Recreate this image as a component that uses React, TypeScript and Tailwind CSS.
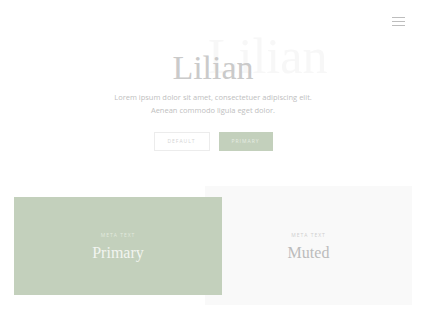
import React from "react";

export default function App() {
  return (
    <div className="w-[426px] h-[320px] bg-white overflow-hidden relative" style={{ fontFamily: '"Open Sans", sans-serif' }}>
      <header className="flex justify-end pt-[17px] pr-[21px]">
        <div className="flex flex-col gap-[3px] w-[13px]">
          <span className="h-[1px] bg-[#bdbdbd]" />
          <span className="h-[1px] bg-[#bdbdbd]" />
          <span className="h-[1px] bg-[#bdbdbd]" />
        </div>
      </header>
      <section className="relative flex flex-col items-center mt-[22px]">
        <span aria-hidden="true" className="absolute left-[208px] top-[-17px] text-[50px] leading-none text-[#f7f7f7] [font-family:'Liberation_Serif',serif]">Lilian</span>
        <h1 className="relative text-[34px] leading-[40px] text-[#cacaca] [font-family:'Liberation_Serif',serif]">Lilian</h1>
        <p className="mt-[3px] text-center text-[7.5px] leading-[13px] text-[#c0c0c0]">
          Lorem ipsum dolor sit amet, consectetuer adipiscing elit.
          <br />
          Aenean commodo ligula eget dolor.
        </p>
        <div className="mt-[15px] flex gap-[9px]">
          <button className="w-[56px] h-[19px] border border-[#ececec] text-[5px] tracking-[1px] text-[#d4d4d4] uppercase">Default</button>
          <button className="w-[54px] h-[19px] bg-[#c3d0bc] text-[5px] tracking-[1px] text-[#e6ece3] uppercase">Primary</button>
        </div>
      </section>
      <section className="mt-[35px] flex items-center pl-[14px]">
        <div className="relative z-10 w-[208px] h-[98px] pt-[4px] bg-[#c3d0bc] flex flex-col items-center justify-center">
          <span className="text-[5px] tracking-[1px] uppercase text-[#e2e9de]">Meta text</span>
          <span className="mt-[3px] text-[16px] leading-[20px] text-[#f2f5f0] [font-family:'Liberation_Serif',serif]">Primary</span>
        </div>
        <div className="ml-[-17px] w-[207px] h-[119px] pt-[4px] bg-[#f9f9f9] flex flex-col items-center justify-center">
          <span className="text-[5px] tracking-[1px] uppercase text-[#cfcfcf]">Meta text</span>
          <span className="mt-[3px] text-[16px] leading-[20px] text-[#bcbcbc] [font-family:'Liberation_Serif',serif]">Muted</span>
        </div>
      </section>
    </div>
  );
}
